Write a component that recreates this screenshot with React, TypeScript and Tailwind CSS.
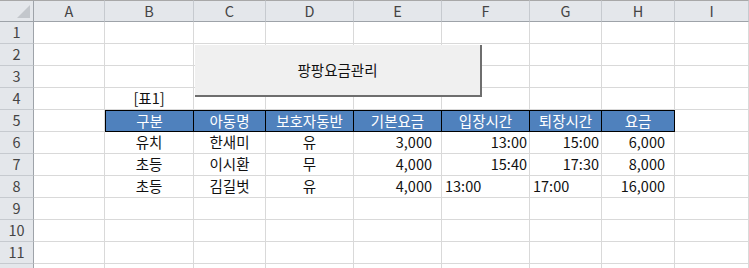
import React from "react";

type Align = "left" | "center" | "right";
type Cell = { text: string; align?: Align; pr?: string };

const cols = ["A", "B", "C", "D", "E", "F", "G", "H", "I"];

const header: string[] = ["구분", "아동명", "보호자동반", "기본요금", "입장시간", "퇴장시간", "요금"];

const data: Cell[][] = [
  [
    { text: "유치", align: "center" },
    { text: "한새미", align: "center" },
    { text: "유", align: "center" },
    { text: "3,000", align: "right", pr: "pr-[9px]" },
    { text: "13:00", align: "right" },
    { text: "15:00", align: "right" },
    { text: "6,000", align: "right", pr: "pr-[9px]" },
  ],
  [
    { text: "초등", align: "center" },
    { text: "이시환", align: "center" },
    { text: "무", align: "center" },
    { text: "4,000", align: "right", pr: "pr-[9px]" },
    { text: "15:40", align: "right" },
    { text: "17:30", align: "right" },
    { text: "8,000", align: "right", pr: "pr-[9px]" },
  ],
  [
    { text: "초등", align: "center" },
    { text: "김길벗", align: "center" },
    { text: "유", align: "center" },
    { text: "4,000", align: "right", pr: "pr-[9px]" },
    { text: "13:00", align: "left" },
    { text: "17:00", align: "left" },
    { text: "16,000", align: "right", pr: "pr-[9px]" },
  ],
];

const alignClass = (a?: Align) =>
  a === "right" ? "justify-end pr-[2px]" : a === "left" ? "justify-start pl-[3px]" : "justify-center";

// row 12 only peeks in at the bottom edge, so its number isn't shown
const RowHead: React.FC<{ n: number }> = ({ n }) => (
  <div className="flex items-center justify-center border-r border-b border-r-[#9ea3a9] border-b-[#c6cacf] bg-[#e4e7eb] text-[#444]">
    {n < 12 ? n : ""}
  </div>
);

const Blank: React.FC = () => <div className="border-r border-b border-[#d9d9d9]" />;

export default function App() {
  const rows: React.ReactNode[] = [];
  for (let r = 1; r <= 12; r++) {
    const cells: React.ReactNode[] = [<RowHead key="h" n={r} />];
    if (r === 4) {
      cells.push(<Blank key="a" />);
      cells.push(
        <div key="b" className="flex items-center justify-center border-r border-b border-[#d9d9d9] text-[#111]">
          [표1]
        </div>
      );
      for (let c = 2; c < 9; c++) cells.push(<Blank key={c} />);
    } else if (r === 5) {
      cells.push(<Blank key="a" />);
      header.forEach((h, i) =>
        cells.push(
          <div
            key={h}
            className={`flex items-center justify-center border-b border-r border-t border-black bg-[#4f81bd] text-white ${i === 0 ? "border-l" : ""}`}
          >
            {h}
          </div>
        )
      );
      cells.push(<Blank key="i" />);
    } else if (r >= 6 && r <= 8) {
      cells.push(<Blank key="a" />);
      data[r - 6].forEach((d, i) =>
        cells.push(
          <div
            key={i}
            className={`flex items-center border-r border-b border-[#d9d9d9] text-[#111] ${alignClass(d.align)} ${d.pr ?? ""}`}
          >
            {d.text}
          </div>
        )
      );
      cells.push(<Blank key="i" />);
    } else {
      for (let c = 0; c < 9; c++) cells.push(<Blank key={c} />);
    }
    rows.push(<React.Fragment key={r}>{cells}</React.Fragment>);
  }

  return (
    <div
      className="relative h-[268px] w-[749px] overflow-hidden bg-white text-[14.5px] leading-none"
      style={{ fontFamily: '"Noto Sans CJK KR", "Noto Sans", sans-serif' }}
    >
      <div className="grid grid-cols-[34px_71px_89px_72px_88px_88px_88px_72px_73px_74px] grid-rows-[22px_repeat(12,22px)]">
        <div className="relative border-r border-b border-t border-r-[#9ea3a9] border-b-[#9ea3a9] border-t-[#a8a8a8] bg-[#e4e7eb]">
          <div className="absolute right-[3px] bottom-[3px] h-0 w-0 border-b-[13px] border-l-[13px] border-b-[#c3c7cc] border-l-transparent" />
        </div>
        {cols.map((c) => (
          <div
            key={c}
            className="flex items-center justify-center border-t border-r border-b border-t-[#a8a8a8] border-r-[#c6cacf] border-b-[#9ea3a9] bg-[#e4e7eb] text-[#444]"
          >
            {c}
          </div>
        ))}
        {rows}
      </div>

      <div className="absolute left-[195px] top-[45px] flex h-[52px] w-[287px] items-center justify-center border-r-2 border-b-2 border-[#6e6e6e] bg-[#f0f0f0] text-[#111]">
        팡팡요금관리
      </div>
    </div>
  );
}
